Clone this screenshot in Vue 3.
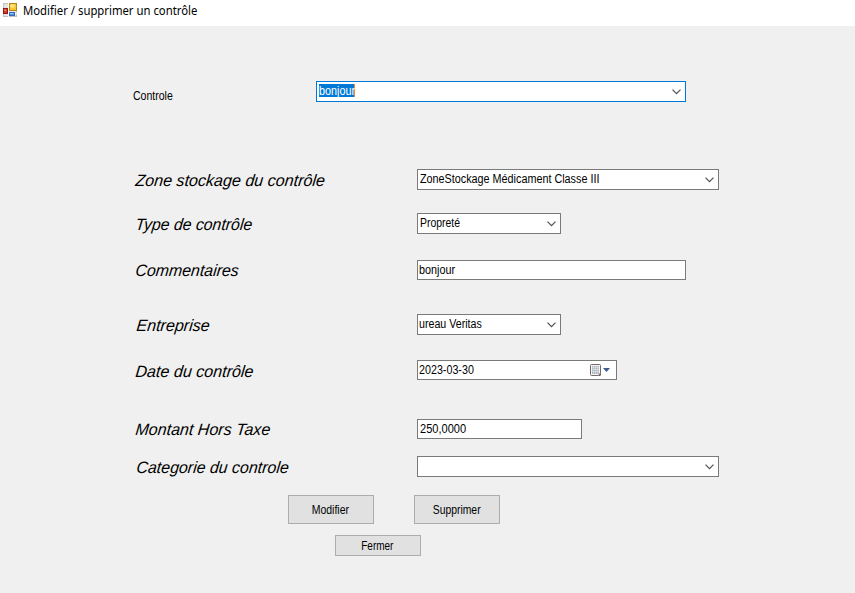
<script setup>
const rows = [
  { id: 'zone', label: 'Zone stockage du contrôle', labelWidth: 189, value: 'ZoneStockage Médicament Classe III', valueWidth: 179, kind: 'combo' },
  { id: 'type', label: 'Type de contrôle', labelWidth: 117, value: 'Propreté', valueWidth: 40, kind: 'combo' },
  { id: 'comment', label: 'Commentaires', labelWidth: 103, value: 'bonjour', valueWidth: 36, kind: 'text' },
  { id: 'company', label: 'Entreprise', labelWidth: 73, value: 'ureau Veritas', valueWidth: 63, kind: 'combo' },
  { id: 'date', label: 'Date du contrôle', labelWidth: 118, value: '2023-03-30', valueWidth: 54.5, kind: 'date' },
  { id: 'amount', label: 'Montant Hors Taxe', labelWidth: 135, value: '250,0000', valueWidth: 46, kind: 'text' },
  { id: 'category', label: 'Categorie du controle', labelWidth: 152.5, value: '', valueWidth: 0, kind: 'combo' },
]

// Condenses a caption horizontally to the given width; form labels are also slanted
const vFit = (el, { value, modifiers }) => {
  const natural = el.offsetWidth
  if (!value || !natural) return
  el.style.transform = `${modifiers.slant ? 'skewX(-6deg) ' : ''}scaleX(${value / natural})`
}
</script>

<template>
  <div class="window">
    <header class="titlebar">
      <svg class="app-icon" width="15" height="15" viewBox="0 0 15 15">
        <rect x="0.5" y="0.5" width="13" height="13" fill="#e4e4e4" stroke="#c2c2c2" />
        <path d="M5.5 0v14M0 10.5h14" stroke="#fff" />
        <rect x="0.5" y="5.5" width="4" height="5" fill="#d8382c" stroke="#96190f" />
        <rect x="1.5" y="6.5" width="1.5" height="1.5" fill="#f29384" />
        <rect x="6.5" y="0.5" width="7" height="7" fill="#f8c72d" stroke="#b5851a" />
        <rect x="7.5" y="1.5" width="4" height="3" fill="#ffe789" />
        <rect x="6.5" y="9.5" width="5" height="3" fill="#5594ee" stroke="#3569bd" />
        <rect x="7" y="10" width="3" height="1" fill="#9cc5ff" />
      </svg>
      <span v-fit="174.5" class="title">Modifier / supprimer un contrôle</span>
    </header>

    <main class="form">
      <div class="picker">
        <span class="picker-label"><span v-fit="39.5" class="text">Controle</span></span>
        <div class="field combo focused">
          <span class="selection"><span v-fit="36" class="text">bonjour</span></span>
          <svg class="chevron" width="9" height="6" viewBox="0 0 9 6"><path d="M0.5 0.7L4.5 4.7L8.5 0.7" /></svg>
        </div>
      </div>

      <div v-for="row in rows" :key="row.id" class="row" :class="row.id">
        <div class="label"><span v-fit.slant="row.labelWidth" class="text">{{ row.label }}</span></div>
        <div class="field" :class="row.kind">
          <span v-fit="row.valueWidth" class="text">{{ row.value }}</span>
          <svg v-if="row.kind === 'combo'" class="chevron" width="9" height="6" viewBox="0 0 9 6"><path d="M0.5 0.7L4.5 4.7L8.5 0.7" /></svg>
          <svg v-if="row.kind === 'date'" class="calendar" width="21" height="13" viewBox="0 0 21 13">
            <path d="M1.5 0.5h8a1 1 0 0 1 1 1v7.5l-2.500 2.500h-6.500a1 1 0 0 1-1-1v-9a1 1 0 0 1 1-1z" fill="#f4f4f4" stroke="#756a6a" />
            <rect x="2" y="2" width="7" height="8" fill="#aeb6bf" />
            <path d="M3.500 2v8M5.500 2v8M7.500 2v8M2 3.500h7M2 5.500h7M2 7.500h7" stroke="#e1e5e9" stroke-width="0.6" />
            <path d="M8 12l3-3v2l-1 1z" fill="#645b5b" />
            <path d="M13 4h7l-3.500 4z" fill="#3f5d8c" />
          </svg>
        </div>
      </div>

      <div class="actions">
        <button type="button"><span v-fit="37.5" class="text">Modifier</span></button>
        <button type="button"><span v-fit="47.5" class="text">Supprimer</span></button>
      </div>
      <button type="button" class="close"><span v-fit="32.5" class="text">Fermer</span></button>
    </main>
  </div>
</template>

<style>
body {
  margin: 0;
  background: #f0f0f0;
}
</style>

<style scoped>
.window {
  box-sizing: border-box;
  width: 855px;
  height: 593px;
  overflow: hidden;
  background: #f0f0f0;
  color: #000;
  font: 12px/14px "Liberation Sans", Arial, sans-serif;
  white-space: pre;
}
.titlebar {
  display: flex;
  align-items: flex-start;
  box-sizing: border-box;
  height: 26px;
  padding: 3px 0 0 3px;
  background: #fff;
}
.title {
  margin-left: 4.5px;
  font: 12px/16px "Noto Sans", "Open Sans", sans-serif;
  transform-origin: 0 0;
}
.text {
  display: inline-block;
  transform-origin: 0 0;
}
.form {
  padding-top: 55px;
}
.picker {
  display: flex;
  height: 21px;
  margin-bottom: 67px;
}
.picker-label {
  box-sizing: border-box;
  width: 316px;
  padding: 8px 0 0 133px;
}
.field {
  display: flex;
  align-items: flex-start;
  box-sizing: border-box;
  height: 20px;
  padding: 2px 0 0 2px;
  border: 1px solid #7a7a7a;
  background: #fff;
}
.combo {
  height: 21px;
}
.focused {
  width: 370px;
  border-color: #0078d7;
}
.selection {
  box-sizing: border-box;
  width: 36px;
  height: 13px;
  border-right: 1px solid #ff8728;
  background: #0078d7;
  color: #fff;
}
.chevron {
  margin: 5px 4px 0 auto;
}
.chevron path {
  fill: none;
  stroke: #505050;
  stroke-width: 1.2;
}
.calendar {
  margin: 1px 5px 0 auto;
}
.row {
  display: flex;
}
.label {
  box-sizing: border-box;
  width: 417px;
  padding-left: 135px;
  font-size: 16.5px;
  font-style: italic;
  line-height: 22px;
}
.label .text {
  transform-origin: 0 17px;
}
.zone { height: 44px; }
.type { height: 47px; }
.comment { height: 54px; }
.company { height: 46px; }
.date.row { height: 59px; }
.amount { height: 37px; }
.category { height: 39px; }
.comment .label,
.amount .label { margin-top: -1px; }
.company .label,
.category .label { padding-left: 136px; }
.zone .field,
.category .field { width: 302px; }
.type .field,
.company .field { width: 144px; }
.comment .field { width: 269px; }
.date .field { width: 200px; padding-left: 1px; }
.amount .field { width: 165px; }
.comment .field,
.company .field { padding-left: 1px; }
button {
  box-sizing: border-box;
  width: 86px;
  height: 29px;
  padding: 0 1px 0 0;
  border: 1px solid #adadad;
  border-radius: 0;
  background: #e1e1e1;
  color: #000;
  font: inherit;
}
button .text {
  transform-origin: 50% 0;
}
.actions {
  display: flex;
  gap: 40px;
  padding-left: 288px;
}
.close {
  display: block;
  height: 21px;
  margin: 11px 0 0 335px;
  padding-right: 2px;
}
</style>
